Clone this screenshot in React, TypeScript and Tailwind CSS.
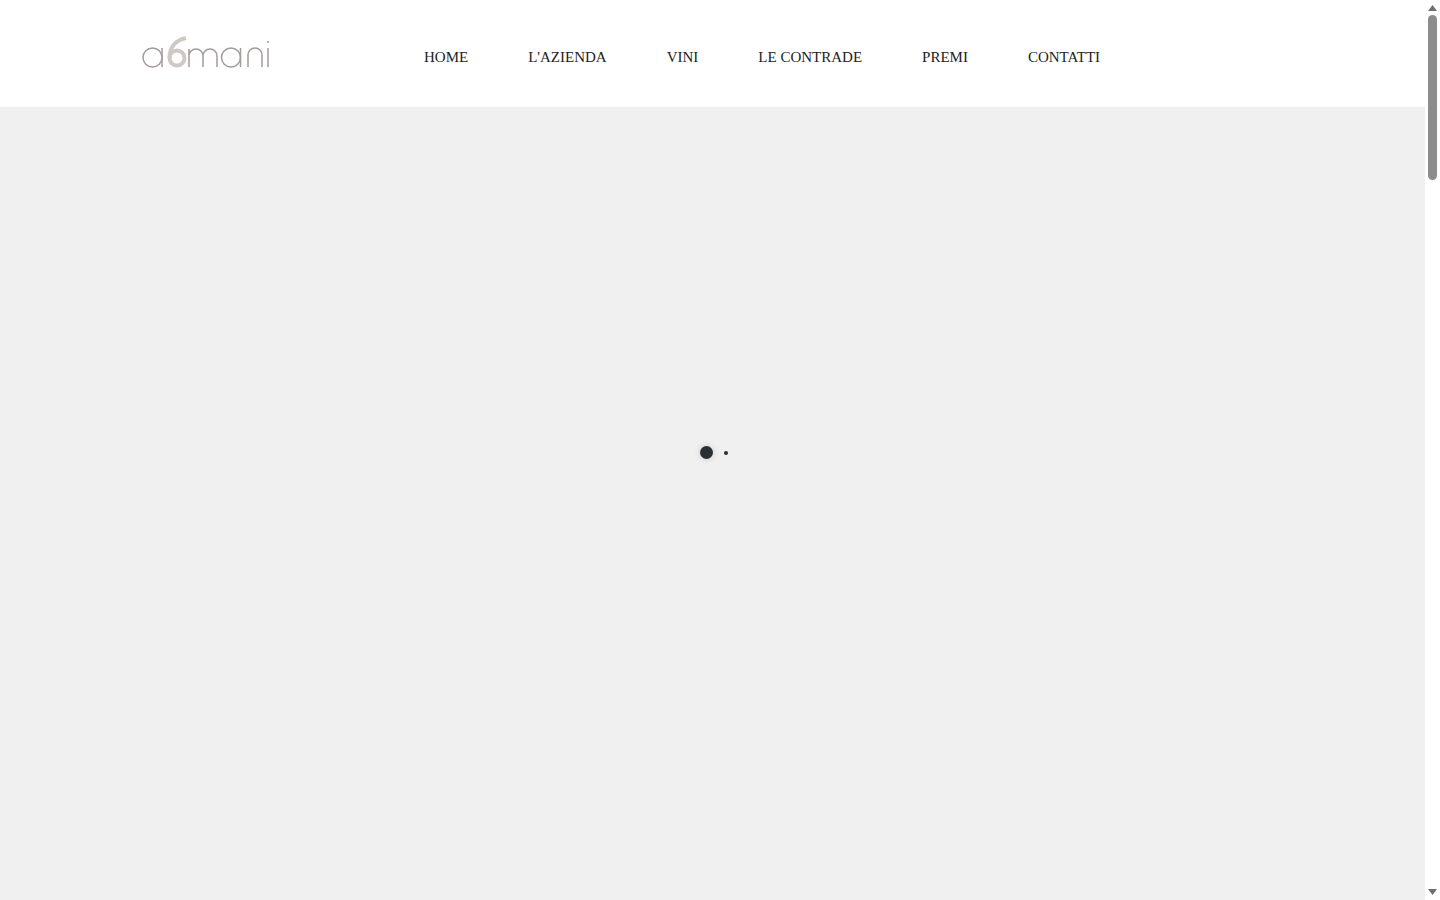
const items = ["HOME", "L'AZIENDA", "VINI", "LE CONTRADE", "PREMI", "CONTATTI"];

function Logo() {
  return (
    <svg width="128" height="34" viewBox="0 0 128 34" fill="none" role="img" aria-label="a6mani">
      <g stroke="#a39a9a" strokeWidth="1.5">
        <circle cx="10.5" cy="21.5" r="9.5" />
        <line x1="20" y1="12" x2="20" y2="31" />
        <path d="M47 31V20a7 7 0 0 1 14 0v11M61 20a7 7 0 0 1 14 0v11M47 13v6" />
        <circle cx="89" cy="21.5" r="9.5" />
        <line x1="98.5" y1="12" x2="98.5" y2="31" />
        <path d="M106 31V19a6.500 6.500 0 0 1 14 0v12" />
        <line x1="126" y1="12" x2="126" y2="31" />
      </g>
      <circle cx="126" cy="6" r="1" fill="#a39a9a" />
      <circle cx="35" cy="22" r="7.500" stroke="#cfc9c6" strokeWidth="4" />
      <path d="M27.500 22C27.500 11 34 4 44 2" stroke="#cfc9c6" strokeWidth="4" />
    </svg>
  );
}

export default function App() {
  return (
    <div className="flex h-[900px] w-[1440px] overflow-hidden bg-white">
      <div className="flex w-[1425px] flex-col">
        <header className="flex h-[107px] shrink-0 items-start bg-white pl-[142px]">
          <div className="mt-[36px] w-[282px]">
            <Logo />
          </div>
          <nav className="mt-[46px] flex gap-[60px] font-['Liberation_Serif',serif] text-[15px] leading-[22px] text-[#222]">
            {items.map((item) => (
              <span key={item}>{item}</span>
            ))}
          </nav>
        </header>
        <main className="flex flex-1 items-start justify-center bg-[#f0f0f0] pl-[3px] pt-[339px]">
          <div className="flex items-center gap-[11px]">
            <div className="h-[13px] w-[13px] rounded-full bg-[#2b2e33] shadow-[0_0_6px_rgba(43,46,51,0.2)]" />
            <div className="h-[4px] w-[4px] rounded-full bg-[#2b2e33]" />
          </div>
        </main>
      </div>
      <aside className="flex w-[15px] flex-col items-center justify-between bg-white py-[5px]">
        <div className="flex flex-col items-center gap-[4px]">
          <svg width="9" height="6" viewBox="0 0 9 6"><polygon points="4.500,0 9,6 0,6" fill="#6e6e6e" /></svg>
          <div className="h-[165px] w-[9px] rounded-full bg-[#8c8c8c]" />
        </div>
        <svg width="9" height="6" viewBox="0 0 9 6"><polygon points="0,0 9,0 4.500,6" fill="#6e6e6e" /></svg>
      </aside>
    </div>
  );
}
